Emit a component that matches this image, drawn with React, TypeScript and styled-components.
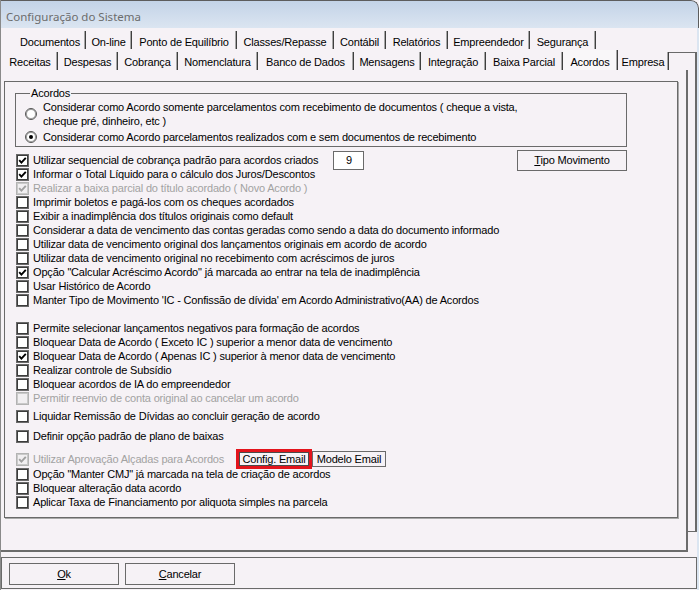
import React from 'react'
import styled, { createGlobalStyle } from 'styled-components'

const GlobalStyle = createGlobalStyle`
  html, body {
    margin: 0;
    padding: 0;
    background: #f6f2f6;
  }
  * {
    box-sizing: border-box;
  }
`

const UI_FONT = `"Liberation Sans", Arial, sans-serif`

const Window = styled.div`
  width: 699px;
  height: 590px;
  display: flex;
  flex-direction: column;
  background: #f6f2f6;
  border-left: 1px solid #8a8a8a;
  border-top-right-radius: 8px;
  overflow: hidden;
  font-family: ${UI_FONT};
  font-size: 11px;
  letter-spacing: -0.18px;
  color: #000;
`

const TitleBar = styled.div`
  height: 28px;
  flex: none;
  display: flex;
  align-items: center;
  padding: 3px 0 0 5px;
  background: linear-gradient(#c3d3e7, #dbe5f1);
  border-top: 1px solid #5d5d5d;
  border-right: 1px solid #5d5d5d;
  border-top-right-radius: 8px;
  color: #6c6c6c;
  font-family: "Noto Sans", "Liberation Sans", sans-serif;
  font-size: 11.5px;
  letter-spacing: 0;
`

const Content = styled.div`
  flex: 1;
  display: flex;
  flex-direction: column;
  border-right: 2px solid #dbe5f1;
`

const TabRow = styled.div<{ $indent: number; $height: number }>`
  height: ${(p) => p.$height}px;
  flex: none;
  display: flex;
  align-items: flex-end;
  padding-left: ${(p) => p.$indent}px;
`

const Tab = styled.div<{ $w: number; $active?: boolean; $top?: number }>`
  width: ${(p) => p.$w}px;
  height: ${(p) => (p.$active ? 20 : 18)}px;
  flex: none;
  text-align: center;
  line-height: 13px;
  padding-top: ${(p) => (p.$top ?? 4) + (p.$active ? 2 : 0)}px;
  white-space: nowrap;
  border-right: 1px solid #3f3f3f;
  box-shadow: inset -1px 0 0 #a6a6a6;
  background: ${(p) => (p.$active ? '#f9f7f9' : 'transparent')};
`

const TopRow = styled(TabRow)`
  padding-bottom: 1px;
`

const RowFiller = styled.div`
  flex: 1;
  height: 18px;
  border-top: 1px solid #6a6a6a;
  border-right: 2px solid #6a6a6a;
`

const Body = styled.div`
  display: flex;
  flex: none;
`

const TabPage = styled.div`
  width: 687px;
  height: 482px;
  flex: none;
  padding: 11px 0 0 3px;
  border-right: 2px solid #6c6c6c;
  border-bottom: 2px solid #6c6c6c;
`

const Gutter = styled.div`
  flex: 1;
  height: 462px;
  border-right: 2px solid #6a6a6a;
  border-bottom: 1px solid #6a6a6a;
`

const Panel = styled.div`
  width: 674px;
  height: 437px;
  border: 1px solid #6a6a6a;
  box-shadow: 1px 1px 0 #a9a9a9;
  padding: 5px 0 0 11px;
  display: flex;
  flex-direction: column;
`

const GroupBox = styled.fieldset`
  width: 612px;
  margin: 0 0 0 -1px;
  padding: 0 0 2px 9px;
  border: 1px solid #6a6a6a;
  min-width: 0;
`

const Legend = styled.legend`
  padding: 0 1px;
  margin-left: 5px;
  line-height: 13px;
`

const RadioRow = styled.div<{ $space?: number }>`
  display: flex;
  align-items: center;
  gap: 6px;
  margin-top: ${(p) => p.$space ?? 0}px;
  line-height: 14px;
`

const RadioCircle = styled.span<{ $on?: boolean }>`
  width: 12px;
  height: 12px;
  flex: none;
  border-radius: 50%;
  background: #fff;
  border: 1px solid #555;
  box-shadow: inset 0 0 0 1px #9c9c9c;
  display: inline-flex;
  align-items: center;
  justify-content: center;

  &::after {
    content: '';
    width: 4px;
    height: 4px;
    border-radius: 50%;
    background: #000;
    display: ${(p) => (p.$on ? 'block' : 'none')};
  }
`

const CheckRow = styled.div<{ $space?: number }>`
  height: 14px;
  flex: none;
  display: flex;
  align-items: center;
  margin-top: ${(p) => p.$space ?? 0}px;
  white-space: nowrap;
`

const Box = styled.span<{ $disabled?: boolean }>`
  width: 13px;
  height: 13px;
  flex: none;
  margin-right: 4px;
  display: inline-flex;
  align-items: center;
  justify-content: center;
  background: ${(p) => (p.$disabled ? '#f1eff1' : '#fff')};
  border: 1px solid ${(p) => (p.$disabled ? '#b3b3b3' : '#6a6a6a')};
  box-shadow: inset 0 0 0 1px ${(p) => (p.$disabled ? '#c9c9c9' : '#3c3c3c')};
`

const Label = styled.span<{ $disabled?: boolean; $w?: number }>`
  color: ${(p) => (p.$disabled ? '#a2a2a2' : '#000')};
  width: ${(p) => (p.$w ? `${p.$w}px` : 'auto')};
  flex: none;
  line-height: 14px;
`

const Edit = styled.div`
  width: 31px;
  height: 19px;
  flex: none;
  background: #fff;
  border: 1px solid #6a6a6a;
  padding-left: 12px;
  line-height: 17px;
`

const Button = styled.div<{ $w: number; $h: number }>`
  width: ${(p) => p.$w}px;
  height: ${(p) => p.$h}px;
  flex: none;
  display: flex;
  align-items: center;
  justify-content: center;
  border: 1px solid #6a6a6a;
  background: #f6f2f6;
  white-space: nowrap;
`

const Highlight = styled.div`
  width: 76px;
  height: 20px;
  flex: none;
  border: 3px solid #e3141c;
  display: flex;
`

const HighlightInner = styled.div`
  flex: 1;
  display: flex;
  align-items: center;
  justify-content: center;
  border: 1px solid #4a4a4a;
  background: #f6f2f6;
  white-space: nowrap;
`

const BottomPanel = styled.div`
  height: 32px;
  flex: none;
  margin-top: 5px;
  border: 1px solid #6a6a6a;
  display: flex;
  gap: 6px;
  padding: 5px 0 0 7px;
`

function Check({ disabled }: { disabled?: boolean }) {
  return (
    <svg width="9" height="9" viewBox="0 0 9 9">
      <polyline
        points="1.2,4.2 3.4,6.6 7.8,1.8"
        fill="none"
        stroke={disabled ? '#a0a0a0' : '#000'}
        strokeWidth="1.9"
      />
    </svg>
  )
}

interface IOption {
  label: string
  checked?: boolean
  disabled?: boolean
  space?: number
}

function CheckOption({
  label,
  checked,
  disabled,
  space,
  labelWidth,
  children
}: IOption & { labelWidth?: number; children?: React.ReactNode }) {
  return (
    <CheckRow $space={space}>
      <Box $disabled={disabled}>{checked && <Check disabled={disabled} />}</Box>
      <Label $disabled={disabled} $w={labelWidth}>
        {label}
      </Label>
      {children}
    </CheckRow>
  )
}

const topTabs = [
  { label: 'Documentos', w: 71 },
  { label: 'On-line', w: 46 },
  { label: 'Ponto de Equilíbrio', w: 105 },
  { label: 'Classes/Repasse', w: 97 },
  { label: 'Contábil', w: 52 },
  { label: 'Relatórios', w: 62 },
  { label: 'Empreendedor', w: 82 },
  { label: 'Segurança', w: 66 }
]

const frontTabs = [
  { label: 'Receitas', w: 55 },
  { label: 'Despesas', w: 60 },
  { label: 'Cobrança', w: 60 },
  { label: 'Nomenclatura', w: 80 },
  { label: 'Banco de Dados', w: 96 },
  { label: 'Mensagens', w: 67 },
  { label: 'Integração', w: 65 },
  { label: 'Baixa Parcial', w: 77 },
  { label: 'Acordos', w: 55, active: true },
  { label: 'Empresa', w: 51 }
]

const firstGroup: IOption[] = [
  { label: 'Informar o Total Líquido para o cálculo dos Juros/Descontos', checked: true },
  { label: 'Realizar a baixa parcial do título acordado ( Novo Acordo )', checked: true, disabled: true },
  { label: 'Imprimir boletos e pagá-los com os cheques acordados' },
  { label: 'Exibir a inadimplência dos títulos originais como default' },
  { label: 'Considerar a data de vencimento das contas geradas como sendo a data do documento informado' },
  { label: 'Utilizar data de vencimento original dos lançamentos originais em acordo de acordo' },
  { label: 'Utilizar data de vencimento original no recebimento com acréscimos de juros' },
  { label: 'Opção "Calcular Acréscimo Acordo" já marcada ao entrar na tela de inadimplência', checked: true },
  { label: 'Usar Histórico de Acordo' },
  { label: "Manter Tipo de Movimento 'IC - Confissão de dívida' em Acordo Administrativo(AA) de Acordos" }
]

const secondGroup: IOption[] = [
  { label: 'Permite selecionar lançamentos negativos para formação de acordos', space: 14 },
  { label: 'Bloquear Data de Acordo ( Exceto IC ) superior a menor data de vencimento' },
  { label: 'Bloquear Data de Acordo ( Apenas IC ) superior à menor data de vencimento', checked: true },
  { label: 'Realizar controle de Subsídio' },
  { label: 'Bloquear acordos de IA do empreendedor' },
  { label: 'Permitir reenvio de conta original ao cancelar um acordo', disabled: true },
  { label: 'Liquidar Remissão de Dívidas ao concluir geração de acordo', space: 4 },
  { label: 'Definir opção padrão de plano de baixas', space: 6 }
]

const lastGroup: IOption[] = [
  { label: 'Opção "Manter CMJ" já marcada na tela de criação de acordos', space: 1 },
  { label: 'Bloquear alteração data acordo' },
  { label: 'Aplicar Taxa de Financiamento por aliquota simples na parcela' }
]

export default function App() {
  return (
    <>
      <GlobalStyle />
      <Window>
        <TitleBar>Configuração do Sistema</TitleBar>
        <Content>
          <TopRow $indent={14} $height={22}>
            {topTabs.map((t) => (
              <Tab key={t.label} $w={t.w} $top={5}>
                {t.label}
              </Tab>
            ))}
          </TopRow>
          <TabRow $indent={2} $height={20}>
            {frontTabs.map((t) => (
              <Tab key={t.label} $w={t.w} $active={t.active}>
                {t.label}
              </Tab>
            ))}
            <RowFiller />
          </TabRow>
          <Body>
            <TabPage>
              <Panel>
                <GroupBox>
                  <Legend>Acordos</Legend>
                  <RadioRow>
                    <RadioCircle />
                    <span>
                      Considerar como Acordo somente parcelamentos com recebimento de documentos ( cheque a vista,
                      <br />
                      cheque pré, dinheiro, etc )
                    </span>
                  </RadioRow>
                  <RadioRow $space={2}>
                    <RadioCircle $on />
                    <span>Considerar como Acordo parcelamentos realizados com e sem documentos de recebimento</span>
                  </RadioRow>
                </GroupBox>

                <CheckOption
                  label="Utilizar sequencial de cobrança padrão para acordos criados"
                  checked
                  space={6}
                  labelWidth={300}
                >
                  <Edit>9</Edit>
                  <Button $w={110} $h={21} style={{ marginLeft: 153 }}>
                    <span>
                      <u>T</u>ipo Movimento
                    </span>
                  </Button>
                </CheckOption>
                {firstGroup.map((o) => (
                  <CheckOption key={o.label} {...o} />
                ))}
                {secondGroup.map((o) => (
                  <CheckOption key={o.label} {...o} />
                ))}
                <CheckOption
                  label="Utilizar Aprovação Alçadas para Acordos"
                  checked
                  disabled
                  space={9}
                  labelWidth={203}
                >
                  <Highlight>
                    <HighlightInner>Config. Email</HighlightInner>
                  </Highlight>
                  <Button $w={74} $h={16}>Modelo Email</Button>
                </CheckOption>
                {lastGroup.map((o) => (
                  <CheckOption key={o.label} {...o} />
                ))}
              </Panel>
            </TabPage>
            <Gutter />
          </Body>
          <BottomPanel>
            <Button $w={110} $h={22}>
              <span>
                <u>O</u>k
              </span>
            </Button>
            <Button $w={110} $h={22}>
              <span>
                <u>C</u>ancelar
              </span>
            </Button>
          </BottomPanel>
        </Content>
      </Window>
    </>
  )
}
